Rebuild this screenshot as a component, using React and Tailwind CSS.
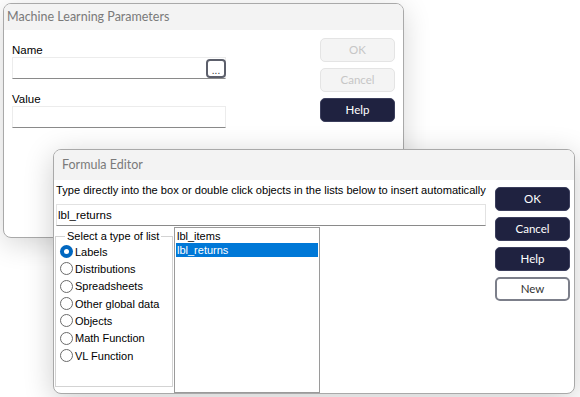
import React, { useState } from "react";

const uiFont = { fontFamily: '"Liberation Sans", Arial, sans-serif' };
const titleFont = { fontFamily: 'Lato, "Noto Sans", sans-serif' };

const listTypes = [
    "Labels",
    "Distributions",
    "Spreadsheets",
    "Other global data",
    "Objects",
    "Math Function",
    "VL Function",
];

const DarkButton = ({ children }) => (
    <button
        className="w-[75px] h-[24px] rounded-[5px] bg-[#1f2240] border border-[#3b3e5c] text-white text-[11.5px] leading-none"
        style={titleFont}
    >
        {children}
    </button>
);

const DisabledButton = ({ children }) => (
    <button
        disabled
        className="w-[75px] h-[24px] rounded-[5px] bg-[#f4f4f4] border border-[#e4e4e4] text-[#c6c6c6] text-[11.5px] leading-none"
        style={titleFont}
    >
        {children}
    </button>
);

const Radio = ({ label, checked, onClick }) => (
    <div className="flex items-center h-[17.33px] cursor-default" onClick={onClick}>
        {checked ? (
            <span className="w-[13px] h-[13px] rounded-full bg-[#0067c0] flex items-center justify-center">
                <span className="w-[5px] h-[5px] rounded-full bg-white" />
            </span>
        ) : (
            <span className="w-[13px] h-[13px] rounded-full border border-[#6b6b6b] bg-white" />
        )}
        <span className="ml-[2px] text-[11px] leading-[14px] text-black">{label}</span>
    </div>
);

const MLParameters = () => (
    <div className="absolute left-[3px] top-[3px] w-[401px] h-[235px] bg-white border border-[#a9a9a9] rounded-[8px] overflow-hidden shadow-[0_6px_28px_rgba(0,0,0,0.16)]">
        <div className="h-[26px] bg-[#f3f3f3] flex items-center pl-[3px]">
            <span className="text-[12.5px] text-[#7a7a7a]" style={titleFont}>Machine Learning Parameters</span>
        </div>
        <div className="flex justify-between pl-[8px] pr-[8px]" style={uiFont}>
            <div className="pt-[13px]">
                <div className="text-[11.5px] leading-[14px] text-black">Name</div>
                <div className="relative w-[214px] h-[22px] border border-[#ececec] border-b-[#8a8a8a]">
                    <button
                        className="absolute right-[-1px] top-[1px] w-[20px] h-[19px] rounded-[4px] border-2 border-[#5c5f6b] bg-white text-[10px] leading-[20px] text-[#333]"
                    >
                        ...
                    </button>
                </div>
                <div className="mt-[13px] text-[11.5px] leading-[14px] text-black">Value</div>
                <div className="w-[214px] h-[22px] border border-[#ececec] border-b-[#8a8a8a]" />
            </div>
            <div className="pt-[8px] flex flex-col gap-[6px]">
                <DisabledButton>OK</DisabledButton>
                <DisabledButton>Cancel</DisabledButton>
                <DarkButton>Help</DarkButton>
            </div>
        </div>
    </div>
);

const FormulaEditor = () => {
    const [type, setType] = useState("Labels");
    const [selected, setSelected] = useState("lbl_returns");
    const [formula, setFormula] = useState("lbl_returns");

    return (
        <div className="absolute left-[53px] top-[149px] w-[522px] h-[245px] bg-white border border-[#a9a9a9] rounded-[8px] overflow-hidden flex flex-col shadow-[0_6px_30px_rgba(0,0,0,0.2)]">
            <div className="h-[30px] shrink-0 bg-[#f3f3f3] flex items-center pl-[8px]">
                <span className="text-[12.5px] text-[#7a7a7a]" style={titleFont}>Formula Editor</span>
            </div>
            <div className="flex flex-1 min-h-0 pl-[2px] pr-[4px]" style={uiFont}>
                <div className="w-[434px] flex flex-col">
                    <div className="mt-[3px] h-[14px] text-[11.1px] leading-[14px] text-black whitespace-nowrap">
                        Type directly into the box or double click objects in the lists below to insert automatically
                    </div>
                    <input
                        value={formula}
                        onChange={(e) => setFormula(e.target.value)}
                        className="mt-[7px] w-[430px] h-[22px] border border-[#e2e2e2] border-b-[#8a8a8a] px-[1px] text-[11.5px] text-black outline-none"
                    />
                    <div className="flex flex-1 min-h-0 mt-[1px]">
                        <fieldset className="mt-[2px] mb-[6px] ml-[-1px] w-[118px] border border-[#d3d3d3] pl-[4px]">
                            <legend className="ml-[5px] px-[2px] text-[11px] leading-[14px] text-black">Select a type of list</legend>
                            <div className="flex flex-col">
                                {listTypes.map((t) => (
                                    <Radio key={t} label={t} checked={type === t} onClick={() => setType(t)} />
                                ))}
                            </div>
                        </fieldset>
                        <div className="ml-[1px] w-[146px] border border-[#9a9a9a] pt-[1px] px-[1px]">
                            {["lbl_items", "lbl_returns"].map((item) => (
                                <div
                                    key={item}
                                    onClick={() => setSelected(item)}
                                    className={`h-[14px] text-[11px] leading-[14px] pl-[1px] ${selected === item ? "bg-[#0078d7] text-white" : "text-black"}`}
                                >
                                    {item}
                                </div>
                            ))}
                        </div>
                    </div>
                </div>
                <div className="ml-auto pt-[7px] flex flex-col gap-[6px]">
                    <DarkButton>OK</DarkButton>
                    <DarkButton>Cancel</DarkButton>
                    <DarkButton>Help</DarkButton>
                    <button
                        className="w-[75px] h-[24px] rounded-[5px] bg-white border-2 border-[#7c7f8a] text-[#333] text-[11.5px] leading-none"
                        style={titleFont}
                    >
                        New
                    </button>
                </div>
            </div>
        </div>
    );
};

const App = () => {
    return (
        <div className="relative w-[580px] h-[397px] bg-white overflow-hidden">
            <MLParameters />
            <FormulaEditor />
        </div>
    );
};

export default App;
